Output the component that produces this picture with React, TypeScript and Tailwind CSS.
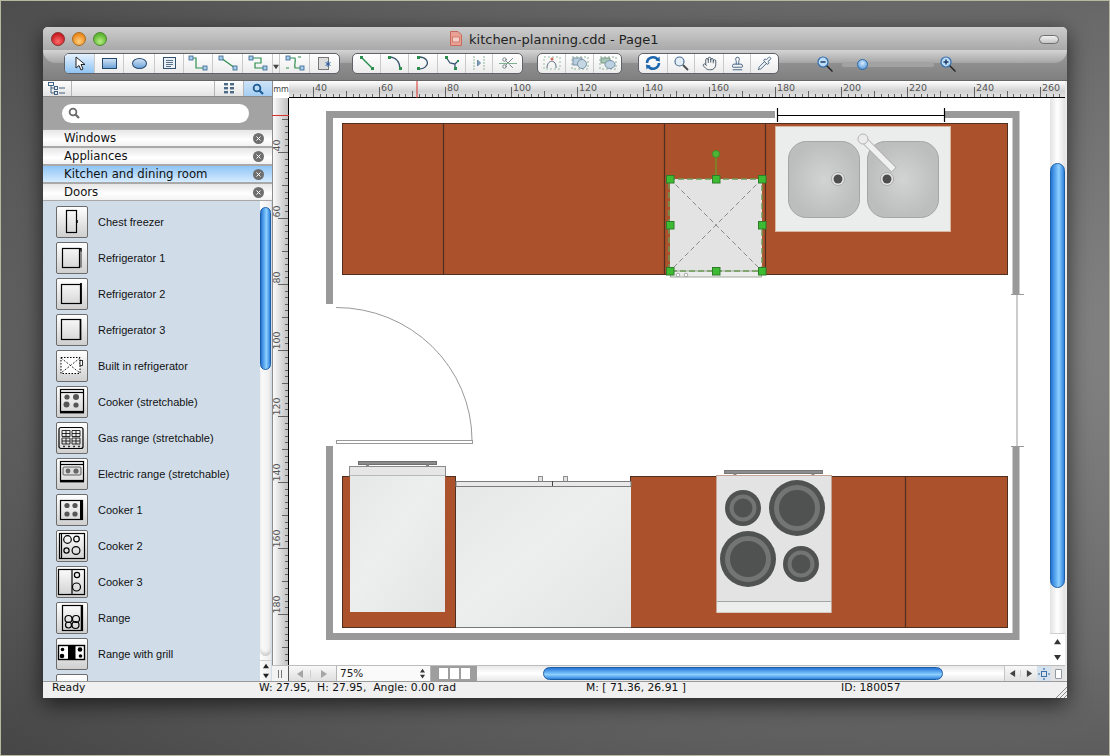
import type { ReactNode } from "react";
import { Hand, Pipette, Scissors, Stamp } from "lucide-react";

const paletteItems = [
  "Chest freezer",
  "Refrigerator 1",
  "Refrigerator 2",
  "Refrigerator 3",
  "Built in refrigerator",
  "Cooker (stretchable)",
  "Gas range (stretchable)",
  "Electric range (stretchable)",
  "Cooker 1",
  "Cooker 2",
  "Cooker 3",
  "Range",
  "Range with grill",
];

const libraries = ["Windows", "Appliances", "Kitchen and dining room", "Doors"];

function Tri({ dir, color, size = 7 }: { dir: "up" | "down" | "left" | "right"; color: string; size?: number }) {
  const points = {
    up: "4,1 8,7 0,7",
    down: "0,1 8,1 4,7",
    left: "1,4 7,0 7,8",
    right: "1,0 7,4 1,8",
  };
  return (
    <svg width={size} height={size} viewBox="0 0 8 8">
      <polygon points={points[dir]} fill={color} />
    </svg>
  );
}

function Box({ x, y }: { x: number; y: number }) {
  return <rect x={x - 2} y={y - 2} width="4" height="4" fill="#a9cdea" stroke="#34648f" strokeWidth="0.8" />;
}

function ConnIcon({ d }: { d: string }) {
  return (
    <svg width="20" height="16" viewBox="0 0 20 16" fill="none">
      <path d={d} stroke="#2f8f4e" strokeWidth="1.2" />
      <Box x={3} y={3} />
      <Box x={17} y={13} />
    </svg>
  );
}

function GroupCell({ width, active, children }: { width: string; active?: boolean; children: ReactNode }) {
  return (
    <div
      className={`${width} flex h-full items-center justify-center border-r border-[#c9c9c9] last:border-r-0 ${
        active ? "bg-[linear-gradient(180deg,#e6f2fd,#8fc3f2)]" : ""
      }`}
    >
      {children}
    </div>
  );
}

function Group({ children }: { children: ReactNode }) {
  return (
    <div className="flex h-[21px] overflow-hidden rounded-[5px] border border-[#5f6368] bg-[linear-gradient(180deg,#ffffff,#ececec)]">
      {children}
    </div>
  );
}

function PaleShape({ children }: { children: ReactNode }) {
  return (
    <svg width="20" height="16" viewBox="0 0 20 16" fill="none">
      {children}
    </svg>
  );
}

function Toolbar() {
  return (
    <div className="relative flex h-[31px] items-center border-b border-[#666666] bg-[linear-gradient(180deg,#9c9c9c,#7f7f7f)] pb-[4px] pl-[21px]">
      <div className="absolute inset-x-0 top-0 h-[13px] rounded-b-[16px] bg-[linear-gradient(180deg,#d4d4d4,#a6a6a6)]" />
      <div className="relative flex items-center">
        <Group>
          <GroupCell width="w-[30px]" active>
            <svg width="12" height="15" viewBox="0 0 12 15">
              <path d="M2 1 L2 12 L5 9.5 L7 14 L9 13 L7 8.5 L11 8.5 Z" fill="#fff" stroke="#222" strokeWidth="1" />
            </svg>
          </GroupCell>
          <GroupCell width="w-[29px]">
            <div className="h-[11px] w-[15px] border border-[#23486e] bg-[linear-gradient(180deg,#cfe2f5,#6fa3d8)]" />
          </GroupCell>
          <GroupCell width="w-[31px]">
            <div className="h-[11px] w-[15px] rounded-[50%] border border-[#23486e] bg-[linear-gradient(180deg,#cfe2f5,#6fa3d8)]" />
          </GroupCell>
          <GroupCell width="w-[29px]">
            <svg width="13" height="12" viewBox="0 0 13 12" fill="none" stroke="#33506c">
              <rect x="0.5" y="0.5" width="12" height="11" fill="#eaf1f8" />
              <path d="M3 3.5h7M3 5.5h7M3 7.5h7M3 9.5h5" strokeWidth="0.8" />
            </svg>
          </GroupCell>
          <GroupCell width="w-[29px]">
            <ConnIcon d="M3 3 H8 V13 H17" />
          </GroupCell>
          <GroupCell width="w-[30px]">
            <ConnIcon d="M3 3 L17 13" />
          </GroupCell>
          <GroupCell width="w-[30px]">
            <ConnIcon d="M3 3 H13 V8 H7 V13 H17" />
          </GroupCell>
          <div className="flex h-full w-[7px] items-end justify-center border-r border-[#c9c9c9] pb-[3px]">
            <Tri dir="down" color="#444" size={6} />
          </div>
          <GroupCell width="w-[30px]">
            <svg width="20" height="16" viewBox="0 0 20 16" fill="none">
              <path d="M4 3 H10 C11 8 9 8 10 13 H17" stroke="#2f8f4e" strokeWidth="1.2" />
              <Box x={3} y={3} />
              <Box x={17} y={13} />
              <path d="M13 2h3M1 13h3" stroke="#2f8f4e" />
            </svg>
          </GroupCell>
          <GroupCell width="w-[29px]">
            <svg width="14" height="15" viewBox="0 0 14 15" fill="none">
              <rect x="0.5" y="1.5" width="10" height="12" fill="#dcdcdc" stroke="#777" />
              <path d="M10 5v6M7.5 6.5l5 3M12.5 6.5l-5 3" stroke="#2b5f9c" strokeWidth="1" />
            </svg>
          </GroupCell>
        </Group>
        <div className="ml-[12px]">
          <Group>
            <GroupCell width="w-[28px]">
              <svg width="16" height="16" viewBox="0 0 16 16" fill="none">
                <path d="M3 3 L13 13" stroke="#2a8f4c" strokeWidth="1.4" />
                <rect x="1" y="1" width="3" height="3" fill="#2a8f4c" />
                <rect x="12" y="12" width="3" height="3" fill="#2a8f4c" />
              </svg>
            </GroupCell>
            <GroupCell width="w-[28px]">
              <svg width="16" height="16" viewBox="0 0 16 16" fill="none">
                <path d="M2 2 C9 2 13 7 13 14" stroke="#3b5670" strokeWidth="1.3" />
                <rect x="1" y="1" width="3" height="3" fill="#2a8f4c" />
                <rect x="12" y="12" width="3" height="3" fill="#2a8f4c" />
              </svg>
            </GroupCell>
            <GroupCell width="w-[29px]">
              <svg width="16" height="16" viewBox="0 0 16 16" fill="none">
                <path d="M4 2 C12 2 14 8 11 11 C9 14 6 14 4 14" stroke="#3b5670" strokeWidth="1.3" />
                <rect x="2" y="1" width="3" height="3" fill="#2a8f4c" />
                <rect x="2" y="12" width="3" height="3" fill="#2a8f4c" />
              </svg>
            </GroupCell>
            <GroupCell width="w-[28px]">
              <svg width="16" height="16" viewBox="0 0 16 16" fill="none">
                <path d="M2 2 L6 8 L11 9 L11 14 M11 9 L14 6" stroke="#3b5670" strokeWidth="1.3" />
                <rect x="1" y="1" width="3" height="3" fill="#2a8f4c" />
                <rect x="10" y="12" width="3" height="3" fill="#2a8f4c" />
                <rect x="13" y="5" width="2" height="2" fill="#2a8f4c" />
              </svg>
            </GroupCell>
            <GroupCell width="w-[27px]">
              <svg width="16" height="16" viewBox="0 0 16 16" fill="none" stroke="#8fb59c">
                <path d="M3 1v14M13 1v14" strokeDasharray="2 1" />
                <path d="M6.5 5v6l3-3z" fill="#7f9fbd" stroke="#6a89a6" />
              </svg>
            </GroupCell>
            <GroupCell width="w-[29px]">
              <div className="relative flex items-center justify-center">
                <Scissors size={14} color="#6c7a80" strokeWidth={1.5} />
                <div className="absolute h-[1px] w-[18px] bg-[#7fb08f]" />
              </div>
            </GroupCell>
          </Group>
        </div>
        <div className="ml-[14px]">
          <Group>
            <GroupCell width="w-[28px]">
              <PaleShape>
                <rect x="2" y="2" width="16" height="12" stroke="#9cc0a8" strokeDasharray="2 2" />
                <path d="M5 13 C5 4 15 4 14 13" stroke="#5b6f80" />
                <circle cx="10" cy="4" r="1.5" fill="#d06a5a" />
              </PaleShape>
            </GroupCell>
            <GroupCell width="w-[28px]">
              <PaleShape>
                <rect x="2" y="2" width="16" height="12" stroke="#8fb09a" strokeDasharray="2 2" />
                <rect x="3" y="3" width="9" height="7" fill="#b9cede" stroke="#7a94a8" />
                <circle cx="12" cy="9" r="4.5" fill="#c6d7e4" stroke="#7a94a8" />
              </PaleShape>
            </GroupCell>
            <GroupCell width="w-[27px]">
              <PaleShape>
                <rect x="2" y="2" width="16" height="12" stroke="#8fb09a" strokeDasharray="2 2" />
                <path d="M3 3h9v5h-9z" fill="#a7c5b4" stroke="#7a9a88" />
                <ellipse cx="12" cy="9.5" rx="5" ry="4" fill="#bcd2e0" stroke="#7a94a8" />
              </PaleShape>
            </GroupCell>
          </Group>
        </div>
        <div className="ml-[16px]">
          <Group>
            <GroupCell width="w-[29px]">
              <svg width="18" height="18" viewBox="0 0 18 18" fill="none">
                <path d="M3 9 A6 6 0 0 1 14 6" stroke="#1b66ad" strokeWidth="2.6" />
                <path d="M15 9 A6 6 0 0 1 4 12" stroke="#1b66ad" strokeWidth="2.6" />
                <path d="M11.5 6.5 L16 7.5 L15.5 2.5 Z M6.5 11.5 L2 10.5 L2.5 15.5 Z" fill="#1b66ad" />
              </svg>
            </GroupCell>
            <GroupCell width="w-[27px]">
              <svg width="16" height="16" viewBox="0 0 16 16" fill="none">
                <circle cx="6.5" cy="6.5" r="4.5" fill="#e4eef7" stroke="#4b6f92" strokeWidth="1.2" />
                <path d="M10 10 L15 15" stroke="#4a4a4a" strokeWidth="1.8" />
              </svg>
            </GroupCell>
            <GroupCell width="w-[29px]">
              <Hand size={15} color="#384a5c" strokeWidth={1.4} />
            </GroupCell>
            <GroupCell width="w-[27px]">
              <Stamp size={15} color="#35597d" strokeWidth={1.4} />
            </GroupCell>
            <GroupCell width="w-[27px]">
              <Pipette size={15} color="#35597d" strokeWidth={1.4} />
            </GroupCell>
          </Group>
        </div>
        <div className="ml-[38px] mt-[3px] flex items-center">
          <ZoomGlass sign="minus" />
          <div className="relative ml-[8px] mr-[6px] flex h-[5px] w-[92px] items-center rounded-full bg-[#a2a2a2]">
            <div className="absolute left-[15px] h-[11px] w-[11px] rounded-full border border-[#2e6aa8] bg-[radial-gradient(circle_at_50%_35%,#d6ebff,#3d86d2)]" />
          </div>
          <ZoomGlass sign="plus" />
        </div>
      </div>
    </div>
  );
}

function ZoomGlass({ sign }: { sign: "minus" | "plus" }) {
  return (
    <svg width="17" height="17" viewBox="0 0 17 17" fill="none">
      <path d="M9 9 L15.5 15.5" stroke="#222" strokeWidth="1.4" />
      <circle cx="6" cy="6" r="5" fill="#bfdcf7" stroke="#2f6db0" strokeWidth="1.2" />
      <path d="M3.5 6h5" stroke="#1d3f68" strokeWidth="1.5" />
      {sign === "plus" && <path d="M6 3.5v5" stroke="#1d3f68" strokeWidth="1.5" />}
    </svg>
  );
}

function PaletteGlyph({ index }: { index: number }) {
  const s = { fill: "none", stroke: "#000", strokeWidth: 1.2 };
  const glyphs: ReactNode[] = [
    <>
      <rect x="10.5" y="4.5" width="10" height="22" fill="#fff" {...s} />
      <path d="M21 14v3" stroke="#000" strokeWidth="1.5" />
    </>,
    <>
      <rect x="6.5" y="6.5" width="17" height="19" fill="#fff" {...s} />
      <path d="M25 6.5v19" stroke="#333" />
      <path d="M23.5 6.5h1.5v3" {...s} />
    </>,
    <>
      <rect x="5.5" y="6.5" width="19" height="19" fill="#fff" {...s} />
      <path d="M25 5v21" stroke="#000" strokeWidth="1.8" />
    </>,
    <>
      <rect x="5.5" y="5.5" width="19" height="20" fill="#fff" {...s} />
      <path d="M24.5 5v21" stroke="#000" strokeWidth="1.6" />
    </>,
    <>
      <rect x="5" y="7.5" width="19" height="16" fill="#fff" stroke="#000" strokeDasharray="1.5 1.5" />
      <path d="M5 8l19 15M24 8l-19 15" stroke="#000" strokeWidth="0.8" strokeDasharray="2 1.5" />
      <rect x="24" y="10.5" width="2.5" height="5" fill="#fff" stroke="#000" strokeWidth="0.8" />
    </>,
    <>
      <rect x="4.5" y="3.5" width="23" height="22" fill="#eee" {...s} />
      <path d="M4.5 6.5h23" {...s} />
      <circle cx="11" cy="11" r="2.6" fill="#555" />
      <circle cx="20" cy="11" r="3" fill="#555" />
      <circle cx="10.5" cy="18.5" r="3" fill="#555" />
      <circle cx="20" cy="19" r="2.6" fill="#555" />
      <path d="M4 26.5h24" stroke="#000" strokeWidth="1.8" />
    </>,
    <>
      <rect x="3" y="5.5" width="24" height="21" rx="2" fill="#fff" {...s} />
      <path d="M6 8.5h8v6h-8zM16 8.5h8v6h-8zM6 16h8v6h-8zM16 16h8v6h-8zM10 8.5v6M6 11.5h8M20 8.5v6M16 11.5h8M10 16v6M6 19h8M20 16v6M16 19h8" fill="none" stroke="#000" strokeWidth="0.8" />
      <path d="M7 24.5h2M12 24.5h2M17 24.5h2M22 24.5h2" stroke="#333" strokeWidth="1.4" />
    </>,
    <>
      <rect x="4.5" y="3.5" width="23" height="19" fill="#eee" {...s} />
      <path d="M4.5 6.5h23" {...s} />
      <rect x="7" y="9" width="18" height="8" rx="1" fill="#ddd" stroke="#222" strokeWidth="0.7" />
      <circle cx="12" cy="13" r="2.4" fill="#666" />
      <circle cx="20" cy="13" r="2.6" fill="#666" />
      <path d="M4 23.5h24" stroke="#000" strokeWidth="1.8" />
    </>,
    <>
      <rect x="4.5" y="6.5" width="22" height="19" fill="#fff" {...s} />
      <circle cx="11" cy="11.5" r="2.6" fill="#555" />
      <circle cx="19" cy="11.5" r="2.6" fill="#555" />
      <circle cx="11" cy="20" r="2.6" fill="#555" />
      <circle cx="19" cy="20" r="2.6" fill="#555" />
      <path d="M25 6v20" stroke="#000" strokeWidth="2" />
    </>,
    <>
      <rect x="3.5" y="3.5" width="25" height="25" fill="#fff" {...s} />
      <path d="M5.5 3.5v25" {...s} />
      <circle cx="11.5" cy="9.5" r="3.8" {...s} />
      <circle cx="20.5" cy="9" r="2.8" {...s} />
      <circle cx="10.5" cy="20.5" r="2.6" {...s} />
      <circle cx="20" cy="20.5" r="3.9" {...s} />
    </>,
    <>
      <rect x="2.5" y="3.5" width="26" height="25" fill="#fff" {...s} />
      <path d="M16 3.5v25" {...s} />
      <circle cx="21" cy="9" r="2.6" {...s} />
      <circle cx="20.5" cy="21" r="4" {...s} />
    </>,
    <>
      <rect x="6.5" y="3.5" width="20" height="25" fill="#fff" {...s} />
      <path d="M25.5 3.5v25" stroke="#000" strokeWidth="1.6" />
      <circle cx="12.5" cy="17" r="3.5" {...s} />
      <circle cx="20" cy="17" r="3.5" {...s} />
      <circle cx="12.5" cy="23" r="3" {...s} />
      <circle cx="19.5" cy="23" r="3.5" {...s} />
    </>,
    <>
      <rect x="2.5" y="7.5" width="26" height="14" fill="#fff" stroke="#000" strokeWidth="1.4" />
      <rect x="12" y="7.5" width="7.5" height="14" fill="#000" />
      <circle cx="6.5" cy="11.5" r="1.8" fill="#000" />
      <circle cx="6" cy="18" r="2.3" fill="#000" />
      <circle cx="24" cy="11.5" r="2.3" fill="#000" />
      <circle cx="24.5" cy="18" r="1.8" fill="#000" />
    </>,
  ];
  return (
    <svg width="30" height="30" viewBox="1 1 30 30">
      {glyphs[index]}
    </svg>
  );
}

function Sidebar() {
  return (
    <div className="flex h-full w-[229px] shrink-0 flex-col">
      <div className="flex h-[16px] shrink-0 border-b border-[#8a8a8a] bg-[linear-gradient(180deg,#fdfdfd,#e4e4e4)]">
        <div className="flex w-[29px] items-center justify-center border-r border-[#b5b5b5]">
          <svg width="18" height="13" viewBox="0 0 18 13" fill="none" stroke="#2f5475" strokeWidth="0.9">
            <rect x="0.5" y="0.5" width="5" height="3" />
            <rect x="6.5" y="4.5" width="3" height="3" />
            <rect x="6.5" y="9.5" width="3" height="3" />
            <path d="M3 4v7h3M3 6h3M11 6h6M11 11h6" />
          </svg>
        </div>
        <div className="flex-1" />
        <div className="flex w-[30px] items-center justify-center border-x border-[#b5b5b5]">
          <svg width="11" height="11" viewBox="0 0 11 11" fill="#4a6a88">
            <rect x="0" y="0" width="4" height="2.4" />
            <rect x="6" y="0" width="4" height="2.4" />
            <rect x="0" y="4" width="4" height="2.4" />
            <rect x="6" y="4" width="4" height="2.4" />
            <rect x="0" y="8" width="4" height="2.4" />
            <rect x="6" y="8" width="4" height="2.4" />
          </svg>
        </div>
        <div className="flex w-[28px] items-center justify-center bg-[linear-gradient(180deg,#cfe4f8,#a4cdf2)]">
          <SearchGlass color="#1f5d96" />
        </div>
      </div>
      <div className="flex h-[32px] shrink-0 items-center bg-[#a3a3a3] pl-[19px]">
        <div className="flex h-[19px] w-[187px] items-center rounded-full bg-white pl-[6px]">
          <SearchGlass color="#6b6b6b" />
        </div>
      </div>
      {libraries.map((name) => (
        <div
          key={name}
          className={`flex h-[18px] shrink-0 items-center border-y border-[#a9a9a9] pl-[21px] pr-[8px] font-['DejaVu_Sans',sans-serif] text-[11.7px] text-[#111] ${
            name.startsWith("Kitchen")
              ? "bg-[linear-gradient(180deg,#8ec5f6,#d6ebff)]"
              : "bg-[linear-gradient(180deg,#e6e6e6,#ffffff_60%,#f2f2f2)]"
          }`}
        >
          <span className="flex-1 pt-[1px] leading-none">{name}</span>
          <div className="mt-[1px] flex h-[11px] w-[11px] items-center justify-center rounded-full bg-[#6f6f6f]">
            <svg width="5" height="5" viewBox="0 0 5 5">
              <path d="M0.5 0.5 L4.5 4.5 M4.5 0.5 L0.5 4.5" stroke="#fff" strokeWidth="1" />
            </svg>
          </div>
        </div>
      ))}
      <div className="flex min-h-0 flex-1 bg-[#d0dde9]">
        <div className="min-w-0 flex-1 overflow-hidden pt-[3px]">
          {paletteItems.map((item, i) => (
            <div key={item} className="flex h-[36px] items-center gap-[10px] pl-[13px]">
              <PaletteButton index={i} />
              <span className="pt-[1px] font-['Liberation_Sans',sans-serif] text-[11px] text-[#111]">{item}</span>
            </div>
          ))}
          <div className="pl-[13px] pt-[2px]">
            <div className="h-[32px] w-[32px] rounded-[2px] border border-[#6b6b6b] bg-[linear-gradient(180deg,#fff,#d8d8d8)]" />
          </div>
        </div>
        <div className="mr-[1px] flex w-[11px] shrink-0 flex-col bg-[linear-gradient(90deg,#fdfdfd,#ececec)]">
          <div className="mt-[6px] h-[163px] rounded-full border border-[#1b5ea8] bg-[linear-gradient(90deg,#2474d4,#6fbaf8_45%,#8fd0ff_60%,#2f82de)]" />
          <div className="flex-1 rounded-b-full shadow-[inset_0_-3px_3px_rgba(0,0,0,0.15)]" />
          <div className="mt-[4px] flex h-[21px] flex-col items-center justify-around border-t border-[#cfcfcf]">
            <Tri dir="up" color="#222" size={6} />
            <Tri dir="down" color="#222" size={6} />
          </div>
        </div>
      </div>
    </div>
  );
}

function PaletteButton({ index }: { index: number }) {
  return (
    <div className="flex h-[32px] w-[32px] shrink-0 items-center justify-center rounded-[2px] border border-[#6b6b6b] bg-[linear-gradient(180deg,#ffffff,#cfcfcf)]">
      <PaletteGlyph index={index} />
    </div>
  );
}

function SearchGlass({ color }: { color: string }) {
  return (
    <svg width="12" height="12" viewBox="0 0 12 12" fill="none">
      <circle cx="5" cy="5" r="3.4" stroke={color} strokeWidth="1.8" />
      <path d="M7.5 7.5 L11 11" stroke={color} strokeWidth="2.2" />
    </svg>
  );
}

function HorizontalRuler() {
  const ticks = [];
  for (let v = 32; v <= 266; v += 2) {
    const x = Math.round(313 + (v - 40) * 3.3025) + 0.5;
    const h = v % 20 === 0 ? 11 : v % 10 === 0 ? 7 : 4;
    ticks.push(<path key={v} d={`M${x} 98V${98 - h}`} stroke="#444" strokeWidth="0.8" />);
    if (v % 20 === 0) {
      ticks.push(
        <text key={`t${v}`} x={x + 1.5} y="90.5" fontSize="9.5" fill="#555" fontFamily="DejaVu Sans, sans-serif">
          {v}
        </text>,
      );
    }
  }
  return (
    <svg className="block" width="776" height="17" viewBox="289 81 776 17">
      <defs>
        <linearGradient id="hr" x1="0" y1="0" x2="0" y2="1">
          <stop offset="0" stopColor="#ffffff" />
          <stop offset="0.6" stopColor="#d2d2d2" />
          <stop offset="1" stopColor="#e6e6e6" />
        </linearGradient>
      </defs>
      <rect x="289" y="81" width="776" height="17" fill="url(#hr)" />
      {ticks}
      <path d="M289 97.5H1065" stroke="#000" />
      <path d="M417 81V98" stroke="#d8302a" />
    </svg>
  );
}

function VerticalRuler() {
  const ticks = [];
  for (let v = 30; v <= 196; v += 2) {
    const y = Math.round(152 + (v - 40) * 3.3) + 0.5;
    if (y < 99 || y > 664) continue;
    const h = v % 20 === 0 ? 11 : v % 10 === 0 ? 7 : 4;
    ticks.push(<path key={v} d={`M289 ${y}H${289 - h}`} stroke="#444" strokeWidth="0.8" />);
    if (v % 20 === 0) {
      ticks.push(
        <text key={`t${v}`} transform={`translate(280 ${y - 1}) rotate(-90)`} fontSize="9.5" fill="#555" fontFamily="DejaVu Sans, sans-serif">
          {v}
        </text>,
      );
    }
  }
  return (
    <svg className="block shrink-0" width="17" height="567" viewBox="272 98 17 567">
      <defs>
        <linearGradient id="vr" x1="0" y1="0" x2="1" y2="0">
          <stop offset="0" stopColor="#ffffff" />
          <stop offset="0.7" stopColor="#cfcfcf" />
          <stop offset="1" stopColor="#bdbdbd" />
        </linearGradient>
      </defs>
      <rect x="272" y="98" width="17" height="567" fill="url(#vr)" />
      <path d="M272.5 98V665" stroke="#8c8c8c" />
      {ticks}
      <path d="M288.5 98V665" stroke="#000" />
      <path d="M272 115.5H289" stroke="#d8302a" />
    </svg>
  );
}

function Burner({ cx, cy, big }: { cx: number; cy: number; big?: boolean }) {
  return (
    <g>
      <circle cx={cx} cy={cy} r={big ? 28 : 18} fill="#505151" />
      <circle cx={cx} cy={cy} r={big ? 20.5 : 11.5} fill="none" stroke="#737574" strokeWidth={big ? 5 : 4} />
    </g>
  );
}

function Plan() {
  const wall = "#999999";
  const edge = "#4e2f20";
  const brown = "#ab512c";
  const handles = [
    [670, 179],
    [716, 179],
    [762, 179],
    [670, 225],
    [762, 225],
    [670, 271],
    [716, 271],
    [762, 271],
  ];
  return (
    <svg className="block" width="761" height="567" viewBox="289 98 761 567">
      <defs>
        <radialGradient id="bowl">
          <stop offset="0" stopColor="#d2d3d3" />
          <stop offset="1" stopColor="#bcbdbd" />
        </radialGradient>
        <linearGradient id="steel" x1="0" y1="0" x2="1" y2="1">
          <stop offset="0" stopColor="#e6e7e7" />
          <stop offset="0.45" stopColor="#edeeee" />
          <stop offset="1" stopColor="#e3e4e4" />
        </linearGradient>
      </defs>
      <rect x="289" y="98" width="761" height="567" fill="#fff" />

      {/* walls */}
      <path
        d="M329.5 304V114.5H775M945 114.5H1016V294M1016 446V636.5H329.5V446"
        fill="none"
        stroke={wall}
        strokeWidth="7"
      />
      <path d="M777.5 108V122M944.5 108V122" stroke="#000" strokeWidth="1.2" />
      <path d="M777 115.5H945" stroke="#000" strokeWidth="1.2" />
      <path d="M1017 294V446M1011 294.5H1024M1011 446.5H1024" stroke="#999" strokeWidth="1" />

      {/* upper counter */}
      <rect x="342.5" y="123.5" width="665" height="151" fill={brown} stroke={edge} />
      <path d="M443.5 123V275M664.5 123V275M765.5 123V275" stroke={edge} strokeWidth="1.2" />

      {/* sink */}
      <rect x="775.5" y="126.5" width="175" height="105" fill="#ebecec" stroke="#d9b5a0" />
      <rect x="788.5" y="141.5" width="71" height="76" rx="18" fill="url(#bowl)" stroke="#a4a5a5" />
      <rect x="867.5" y="141.5" width="71" height="76" rx="18" fill="url(#bowl)" stroke="#a4a5a5" />
      <circle cx="838" cy="179" r="6.5" fill="#e9e9e9" stroke="#a9a9a9" />
      <circle cx="838" cy="179" r="4.5" fill="#4e4e4e" />
      <circle cx="887" cy="179" r="6.5" fill="#e9e9e9" stroke="#a9a9a9" />
      <circle cx="887" cy="179" r="4.5" fill="#4e4e4e" />
      <path d="M863 139 L894 170" stroke="#a9a9a9" strokeWidth="7" />
      <path d="M863 139 L893.5 169.5" stroke="#f0f0f0" strokeWidth="5.4" />
      <circle cx="863" cy="139" r="5" fill="#ececec" stroke="#b5b5b5" />

      {/* selected dishwasher */}
      <rect x="670" y="179" width="92" height="92" fill="#e3e3e3" />
      <rect x="670.5" y="271" width="91" height="6" fill="#ececec" stroke="#8a9a86" strokeWidth="0.8" />
      <circle cx="678" cy="275" r="1.8" fill="#fff" stroke="#888" strokeWidth="0.7" />
      <circle cx="686" cy="275" r="1.8" fill="#fff" stroke="#888" strokeWidth="0.7" />
      <path d="M670 179 L762 271 M762 179 L670 271" stroke="#8a8a8a" strokeWidth="1" strokeDasharray="5 3" />
      <rect x="669" y="179" width="93" height="92" fill="none" stroke="#6d9a56" strokeWidth="1.4" strokeDasharray="6 3" />
      <path d="M716 154V179" stroke="#6d9428" strokeWidth="1.4" />
      <circle cx="716" cy="154" r="3.5" fill="#4fb535" stroke="#3d8f2a" />
      {handles.map(([x, y]) => (
        <rect key={`${x}-${y}`} x={x - 3.5} y={y - 3.5} width="7.5" height="7.5" fill="#3dbb32" stroke="#2e7d2a" />
      ))}

      {/* door */}
      <path d="M336 307.5 A136 133 0 0 1 472 440" fill="none" stroke="#999" />
      <rect x="336.5" y="440.5" width="136" height="3" fill="#fff" stroke="#999" />

      {/* lower counter */}
      <rect x="342.5" y="476.5" width="113" height="151" fill={brown} stroke={edge} />
      <rect x="630.5" y="476.5" width="377" height="151" fill={brown} stroke={edge} />
      <path d="M905.5 476V628" stroke={edge} strokeWidth="1.2" />

      {/* fridge */}
      <rect x="358.5" y="461.5" width="78" height="3" fill="#8c8c8c" stroke="#6e6e6e" />
      <rect x="366" y="464.5" width="3" height="2" fill="#888" />
      <rect x="426" y="464.5" width="3" height="2" fill="#888" />
      <rect x="349.5" y="466.5" width="96" height="9.5" fill="#e6e6e6" stroke="#8a8a8a" />
      <rect x="350" y="476" width="95" height="136" fill="url(#steel)" />

      {/* dishwasher in counter */}
      <rect x="538.5" y="476.5" width="4" height="5" fill="#e4e4e4" stroke="#8f8f8f" />
      <rect x="563.5" y="476.5" width="4" height="5" fill="#e4e4e4" stroke="#8f8f8f" />
      <rect x="456" y="481.5" width="175" height="5" fill="#e9e9e9" stroke="#7c7c7c" />
      <path d="M552.5 481V486" stroke="#444" />
      <rect x="456" y="487" width="175" height="140.5" fill="url(#steel)" />
      <path d="M456 627.5H631" stroke="#777" />

      {/* cooker */}
      <rect x="724.5" y="470.5" width="98" height="3" fill="#8c8c8c" stroke="#777" />
      <rect x="733.5" y="473.5" width="3" height="3" fill="#888" />
      <rect x="811.5" y="473.5" width="3" height="3" fill="#888" />
      <rect x="716.5" y="475.5" width="115" height="137" fill="#e3e3e3" stroke="#c4a594" />
      <rect x="717" y="602" width="114" height="10.5" fill="#eceded" />
      <path d="M717 601.5H831" stroke="#a5a5a5" />
      <Burner cx={743} cy={508} />
      <Burner cx={797} cy={508} big />
      <Burner cx={748} cy={559} big />
      <Burner cx={801} cy={564} />
    </svg>
  );
}

function BottomBar() {
  return (
    <div className="flex h-[16px] shrink-0 border-t border-[#bdbdbd] bg-[#f3f3f3]">
      <div className="flex w-[17px] items-center justify-center gap-[2px] border-r border-[#555]">
        <div className="h-[8px] w-[1px] bg-[#777]" />
        <div className="h-[8px] w-[1px] bg-[#777]" />
      </div>
      <div className="flex w-[47px] items-center bg-[linear-gradient(180deg,#f8f8f8,#dfdfdf)]">
        <div className="flex w-[22px] justify-center border-r border-[#cfcfcf]">
          <Tri dir="left" color="#a5a5a5" size={8} />
        </div>
        <div className="flex flex-1 justify-center">
          <Tri dir="right" color="#a5a5a5" size={8} />
        </div>
      </div>
      <div className="flex w-[95px] items-center border-x border-[#b5b5b5] bg-[#fafafa] pl-[3px] font-['DejaVu_Sans',sans-serif] text-[10.5px] text-[#222]">
        <span className="flex-1">75%</span>
        <div className="flex w-[16px] flex-col items-center gap-[1px]">
          <Tri dir="up" color="#333" size={5} />
          <Tri dir="down" color="#333" size={5} />
        </div>
      </div>
      <div className="flex w-[46px] items-center justify-center gap-[2px] bg-[#9e9e9e]">
        <div className="h-[11px] w-[9px] bg-white" />
        <div className="h-[11px] w-[9px] bg-white" />
        <div className="h-[11px] w-[9px] bg-white" />
      </div>
      <div className="flex flex-1 items-center bg-[linear-gradient(180deg,#e9e9e9,#ffffff_50%,#e6e6e6)] pl-[66px]">
        <div className="h-[13px] w-[400px] rounded-full border border-[#1b5ea8] bg-[linear-gradient(180deg,#2474d4,#6fbaf8_45%,#8fd0ff_60%,#2f82de)]" />
      </div>
      <div className="flex w-[33px] items-center border-l border-[#c5c5c5] bg-[linear-gradient(180deg,#f8f8f8,#e2e2e2)]">
        <div className="flex w-[16px] justify-center border-r border-[#cfcfcf]">
          <Tri dir="left" color="#444" />
        </div>
        <div className="flex flex-1 justify-center">
          <Tri dir="right" color="#444" />
        </div>
      </div>
      <div className="flex w-[14px] items-center justify-center bg-[#d5e1ec]">
        <svg width="12" height="12" viewBox="0 0 12 12" fill="none" stroke="#3a6ea5">
          <rect x="3.5" y="3.5" width="5" height="5" />
          <path d="M6 0v2M6 10v2M0 6h2M10 6h2" strokeWidth="1.2" />
        </svg>
      </div>
      <div className="flex w-[14px] items-center justify-center bg-[#e3e3e3]">
        <div className="h-[10px] w-[7px] rounded-[1px] border border-[#8f9aa5] bg-white" />
      </div>
    </div>
  );
}

function StatusBar() {
  return (
    <div className="relative flex h-[17px] shrink-0 items-center rounded-b-[2px] border-t border-[#9a9a9a] bg-[#f0f0f0] pb-[4px] font-['DejaVu_Sans',sans-serif] text-[10.75px] text-[#111]">
      <span className="ml-[9px] w-[207px]">Ready</span>
      <span className="w-[327px] whitespace-pre">W: 27.95,  H: 27.95,  Angle: 0.00 rad</span>
      <span className="w-[255px]">M: [ 71.36, 26.91 ]</span>
      <span>ID: 180057</span>
      <svg className="absolute bottom-0 right-0" width="12" height="12" viewBox="0 0 12 12" stroke="#8a8a8a">
        <path d="M1 12L12 1M5 12L12 5M9 12L12 9" />
      </svg>
    </div>
  );
}

export default function App() {
  return (
    <div className="h-[756px] w-[1110px] overflow-hidden border border-[#b8b8a0] bg-[radial-gradient(ellipse_at_85%_45%,#858585,#6a6a6a_55%,#464646)] pl-[42px] pt-[26px]">
      <div className="flex h-[671px] w-[1024px] flex-col overflow-hidden rounded-t-[5px] bg-[#e9e9e9] shadow-[0_6px_22px_rgba(0,0,0,0.65)]">
        <div className="relative flex h-[23px] shrink-0 items-center bg-[linear-gradient(180deg,#cdcdcd,#a9a9a9)] pl-[8px]">
          <div className="flex gap-[7px]">
            <div className="h-[14px] w-[14px] rounded-full border border-[#8e2a2a] bg-[radial-gradient(circle_at_50%_70%,#ff6b6b,#c81e25_70%)]" />
            <div className="h-[14px] w-[14px] rounded-full border border-[#a66a20] bg-[radial-gradient(circle_at_50%_70%,#ffd080,#ec8a1c_70%)]" />
            <div className="h-[14px] w-[14px] rounded-full border border-[#4c8a2c] bg-[radial-gradient(circle_at_50%_70%,#b8ee80,#5cb534_70%)]" />
          </div>
          <div className="ml-[343px] flex items-center gap-[7px]">
            <svg width="12" height="15" viewBox="0 0 12 15">
              <path d="M0.5 0.5H8L11.5 4V14.5H0.5Z" fill="#e8a295" stroke="#c9685c" />
              <rect x="2.5" y="6" width="7" height="5" fill="#f3cfc5" stroke="#cf6f5f" strokeWidth="0.8" />
            </svg>
            <span className="mt-[2px] font-['DejaVu_Sans',sans-serif] text-[13px] leading-none text-[#222]">kitchen-planning.cdd - Page1</span>
          </div>
          <div className="absolute right-[8px] top-[8px] h-[9px] w-[20px] rounded-full border border-[#6f6f6f] bg-[linear-gradient(180deg,#f2f2f2,#c4c4c4)]" />
        </div>
        <Toolbar />
        <div className="flex min-h-0 flex-1">
          <Sidebar />
          <div className="flex min-w-0 flex-1 flex-col pr-[2px]">
            <div className="flex h-[17px] shrink-0">
              <div className="flex w-[17px] shrink-0 items-center justify-center border-l border-[#8c8c8c] bg-white font-['DejaVu_Sans',sans-serif] text-[8px] text-[#444]">
                mm
              </div>
              <HorizontalRuler />
            </div>
            <div className="flex min-h-0 flex-1">
              <VerticalRuler />
              <Plan />
              <div className="flex w-[15px] shrink-0 flex-col bg-[linear-gradient(90deg,#e2e2e2,#ffffff_50%,#e2e2e2)]">
                <div className="mt-[65px] h-[425px] rounded-full border border-[#1b5ea8] bg-[linear-gradient(90deg,#2474d4,#6fbaf8_45%,#8fd0ff_60%,#2f82de)]" />
                <div className="flex-1" />
                <div className="flex h-[32px] flex-col items-center justify-around border-t border-[#cfcfcf] bg-white">
                  <Tri dir="up" color="#333" />
                  <Tri dir="down" color="#333" />
                </div>
              </div>
            </div>
            <BottomBar />
          </div>
        </div>
        <StatusBar />
      </div>
    </div>
  );
}
